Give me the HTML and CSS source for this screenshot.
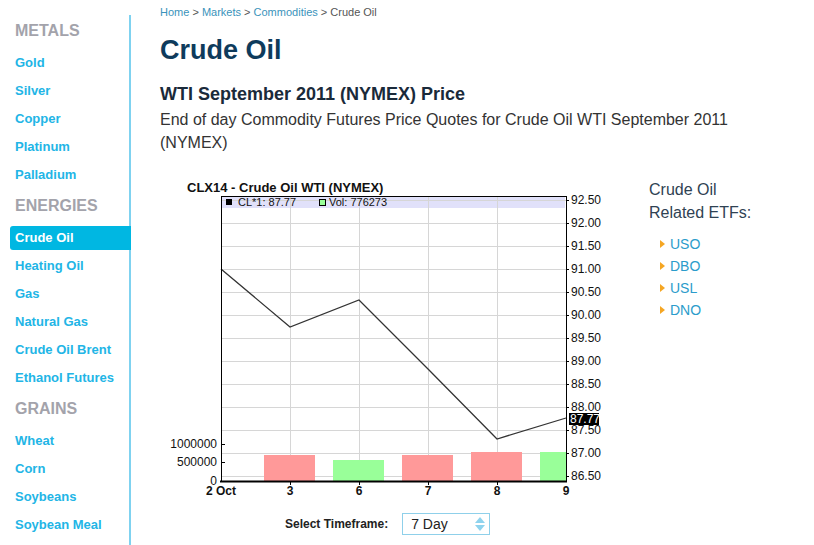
FILE: index.html
```html
<!DOCTYPE html>
<html lang="en">
<head>
    <meta charset="UTF-8">
    <title>Crude Oil</title>
    <link rel="stylesheet" href="styles.css">
</head>
<body>
    <div class="page">
        <div class="sidebar">
            <div class="side-head">METALS</div>
            <a class="side-link" href="#">Gold</a>
            <a class="side-link" href="#">Silver</a>
            <a class="side-link" href="#">Copper</a>
            <a class="side-link" href="#">Platinum</a>
            <a class="side-link" href="#">Palladium</a>
            <div class="side-head">ENERGIES</div>
            <a class="side-link active" href="#">Crude Oil</a>
            <a class="side-link" href="#">Heating Oil</a>
            <a class="side-link" href="#">Gas</a>
            <a class="side-link" href="#">Natural Gas</a>
            <a class="side-link" href="#">Crude Oil Brent</a>
            <a class="side-link" href="#">Ethanol Futures</a>
            <div class="side-head">GRAINS</div>
            <a class="side-link" href="#">Wheat</a>
            <a class="side-link" href="#">Corn</a>
            <a class="side-link" href="#">Soybeans</a>
            <a class="side-link" href="#">Soybean Meal</a>
        </div>

        <div class="main">
            <div class="crumbs">
                <a href="#">Home</a> &gt; <a href="#">Markets</a> &gt; <a href="#">Commodities</a> &gt; <span>Crude Oil</span>
            </div>
            <h1>Crude Oil</h1>
            <h2>WTI September 2011 (NYMEX) Price</h2>
            <p class="intro">End of day Commodity Futures Price Quotes for Crude Oil WTI September 2011 (NYMEX)</p>

            <div class="chart-row">
                <div class="chart-col">
                    <svg class="chart" width="440" height="322" viewBox="0 0 440 322">
                        <text class="chart-title" x="17" y="14">CLX14 - Crude Oil WTI (NYMEX)</text>
                        <rect x="51" y="18" width="345" height="285" fill="#fff"/>
                        <rect x="52" y="19" width="343" height="11" fill="#e1e1fa"/>

                        <g class="grid">
                            <line x1="120.5" y1="18" x2="120.5" y2="303"/>
                            <line x1="189.5" y1="18" x2="189.5" y2="303"/>
                            <line x1="258.5" y1="18" x2="258.5" y2="303"/>
                            <line x1="327.5" y1="18" x2="327.5" y2="303"/>
                            <line x1="51" y1="22.5" x2="396" y2="22.5"/>
                            <line x1="51" y1="45.5" x2="396" y2="45.5"/>
                            <line x1="51" y1="68.5" x2="396" y2="68.5"/>
                            <line x1="51" y1="91.5" x2="396" y2="91.5"/>
                            <line x1="51" y1="114.5" x2="396" y2="114.5"/>
                            <line x1="51" y1="137.5" x2="396" y2="137.5"/>
                            <line x1="51" y1="160.5" x2="396" y2="160.5"/>
                            <line x1="51" y1="183.5" x2="396" y2="183.5"/>
                            <line x1="51" y1="206.5" x2="396" y2="206.5"/>
                            <line x1="51" y1="229.5" x2="396" y2="229.5"/>
                            <line x1="51" y1="252.5" x2="396" y2="252.5"/>
                            <line x1="51" y1="275.5" x2="396" y2="275.5"/>
                            <line x1="51" y1="298.5" x2="396" y2="298.5"/>
                        </g>

                        <!-- volume -->
                        <rect class="bar-down" x="94" y="277" width="51" height="26"/>
                        <rect class="bar-up" x="163" y="282" width="51" height="21"/>
                        <rect class="bar-down" x="232" y="277" width="51" height="26"/>
                        <rect class="bar-down" x="301" y="274" width="51" height="29"/>
                        <rect class="bar-up" x="370" y="274" width="26" height="29"/>

                        <!-- legend -->
                        <rect x="56" y="21" width="6" height="6" fill="#000"/>
                        <text class="legend" x="68" y="28">CL*1: 87.77</text>
                        <rect x="149.5" y="21.5" width="6" height="6" fill="#99ff99" stroke="#000"/>
                        <text class="legend" x="159" y="28">Vol: 776273</text>

                        <polyline class="price" points="51,91 120,149 189,122 258,191 327,261 396,240"/>

                        <rect x="51.5" y="18.5" width="345" height="285" fill="none" stroke="#000"/>
                        <line x1="50" y1="303.5" x2="397" y2="303.5" stroke="#000" stroke-width="2"/>

                        <g class="ticks">
                            <line x1="396" y1="22.5" x2="399" y2="22.5"/>
                            <line x1="396" y1="45.5" x2="399" y2="45.5"/>
                            <line x1="396" y1="68.5" x2="399" y2="68.5"/>
                            <line x1="396" y1="91.5" x2="399" y2="91.5"/>
                            <line x1="396" y1="114.5" x2="399" y2="114.5"/>
                            <line x1="396" y1="137.5" x2="399" y2="137.5"/>
                            <line x1="396" y1="160.5" x2="399" y2="160.5"/>
                            <line x1="396" y1="183.5" x2="399" y2="183.5"/>
                            <line x1="396" y1="206.5" x2="399" y2="206.5"/>
                            <line x1="396" y1="229.5" x2="399" y2="229.5"/>
                            <line x1="396" y1="252.5" x2="399" y2="252.5"/>
                            <line x1="396" y1="275.5" x2="399" y2="275.5"/>
                            <line x1="396" y1="298.5" x2="399" y2="298.5"/>
                            <line x1="51" y1="266.5" x2="55" y2="266.5"/>
                            <line x1="51" y1="284.5" x2="55" y2="284.5"/>
                            <line x1="120.5" y1="303" x2="120.5" y2="307"/>
                            <line x1="189.5" y1="303" x2="189.5" y2="307"/>
                            <line x1="258.5" y1="303" x2="258.5" y2="307"/>
                            <line x1="327.5" y1="303" x2="327.5" y2="307"/>
                        </g>

                        <g class="axis-r">
                            <text x="401" y="26">92.50</text>
                            <text x="401" y="49">92.00</text>
                            <text x="401" y="72">91.50</text>
                            <text x="401" y="95">91.00</text>
                            <text x="401" y="118">90.50</text>
                            <text x="401" y="141">90.00</text>
                            <text x="401" y="164">89.50</text>
                            <text x="401" y="187">89.00</text>
                            <text x="401" y="210">88.50</text>
                            <text x="401" y="233">88.00</text>
                            <text x="401" y="256">87.50</text>
                            <text x="401" y="279">87.00</text>
                            <text x="401" y="302">86.50</text>
                        </g>
                        <rect x="399" y="235" width="30" height="12" fill="#000"/>
                        <text class="last" x="400" y="245">87.77</text>

                        <g class="axis-l">
                            <text x="47" y="270">1000000</text>
                            <text x="47" y="288">500000</text>
                            <text x="47" y="307">0</text>
                        </g>

                        <g class="axis-x">
                            <text x="51" y="317">2 Oct</text>
                            <text x="120" y="317">3</text>
                            <text x="189" y="317">6</text>
                            <text x="258" y="317">7</text>
                            <text x="327" y="317">8</text>
                            <text x="396" y="317">9</text>
                        </g>
                    </svg>

                    <div class="timeframe">
                        <span class="tf-label">Select Timeframe:</span>
                        <div class="tf-select">
                            <span>7 Day</span>
                            <svg width="10" height="14" viewBox="0 0 10 14">
                                <path d="M5 0 L10 6 L0 6 Z" fill="#8fd3ee"/>
                                <path d="M0 8 L10 8 L5 14 Z" fill="#8fd3ee"/>
                            </svg>
                        </div>
                    </div>
                </div>

                <div class="etfs">
                    <div class="etf-head">Crude Oil<br>Related ETFs:</div>
                    <ul class="etf-list">
                        <li><a href="#">USO</a></li>
                        <li><a href="#">DBO</a></li>
                        <li><a href="#">USL</a></li>
                        <li><a href="#">DNO</a></li>
                    </ul>
                </div>
            </div>
        </div>
    </div>
</body>
</html>
```

FILE: styles.css
```css
body {
    margin: 0;
    background: #fff;
    font-family: "Liberation Sans", Arial, sans-serif;
}
a {
    text-decoration: none;
}
.page {
    display: flex;
    min-height: 100vh;
}

/*
 * SIDEBAR
 */
.sidebar {
    width: 119px;
    flex-shrink: 0;
    margin-top: 15px;
    padding-left: 10px;
    border-right: 2px solid #7fd2f0;
}
.side-head {
    margin: 7px 0 8px;
    padding-left: 5px;
    height: 24px;
    line-height: 24px;
    font-size: 16px;
    font-weight: bold;
    color: #a3a3ab;
}
.side-head:first-child {
    margin-top: 4px;
}
.side-link {
    display: block;
    height: 24px;
    line-height: 24px;
    margin-bottom: 4px;
    padding-left: 5px;
    font-size: 13px;
    font-weight: bold;
    color: #22b5e6;
    white-space: nowrap;
}
.side-link.active {
    background: #00b7e2;
    color: #fff;
    border-radius: 3px 0 0 3px;
    margin-right: -2px;
}

/*
 * MAIN
 */
.main {
    flex: 1;
    padding: 5px 40px 0 29px;
}
.crumbs {
    font-size: 11px;
    line-height: 14px;
    color: #555;
}
.crumbs a {
    color: #3a93bb;
}
h1 {
    margin: 16px 0 0;
    font-size: 27px;
    line-height: 31px;
    color: #0e3b5c;
}
h2 {
    margin: 17px 0 0;
    font-size: 18px;
    line-height: 22px;
    color: #1a2a3a;
}
.intro {
    margin: 3px 0 0;
    font-size: 16px;
    line-height: 23px;
    color: #333;
}

.chart-row {
    display: flex;
    margin-top: 24px;
}
.chart-col {
    width: 440px;
    margin-left: 10px;
}
.chart {
    display: block;
}
.chart text {
    font-family: "Liberation Sans", Arial, sans-serif;
}
.chart-title {
    font-size: 13px;
    font-weight: bold;
    fill: #111;
}
.grid line {
    stroke: #d6d6d6;
    stroke-width: 1;
}
.ticks line {
    stroke: #000;
    stroke-width: 1;
}
.bar-down {
    fill: #ff9999;
}
.bar-up {
    fill: #99ff99;
}
.price {
    fill: none;
    stroke: #333;
    stroke-width: 1.3;
}
.legend {
    font-size: 11px;
    fill: #111;
}
.axis-r text {
    font-size: 12px;
    fill: #111;
}
.last {
    font-size: 12px;
    fill: #fff;
}
.axis-l text {
    font-size: 12px;
    fill: #111;
    text-anchor: end;
}
.axis-x text {
    font-size: 12px;
    font-weight: bold;
    fill: #111;
    text-anchor: middle;
}

.timeframe {
    display: flex;
    align-items: center;
    gap: 14px;
    padding-left: 115px;
    margin-top: 13px;
}
.tf-label {
    font-size: 12px;
    font-weight: bold;
    color: #222;
}
.tf-select {
    box-sizing: border-box;
    width: 88px;
    height: 22px;
    display: flex;
    align-items: center;
    justify-content: space-between;
    padding: 0 4px 0 8px;
    border: 1px solid #8fd0ea;
    font-size: 14px;
    color: #222;
}

/*
 * ETF LIST
 */
.etfs {
    margin-left: 39px;
}
.etf-head {
    font-size: 16px;
    line-height: 23px;
    color: #2f4253;
}
.etf-list {
    list-style: none;
    margin: 9px 0 0;
    padding: 0 0 0 11px;
}
.etf-list li {
    position: relative;
    padding-left: 10px;
    font-size: 14px;
    line-height: 22px;
}
.etf-list li::before {
    content: "";
    position: absolute;
    left: 0;
    top: 7px;
    border-left: 5px solid #f5a623;
    border-top: 4px solid transparent;
    border-bottom: 4px solid transparent;
}
.etf-list a {
    color: #2b9ccb;
}
```
